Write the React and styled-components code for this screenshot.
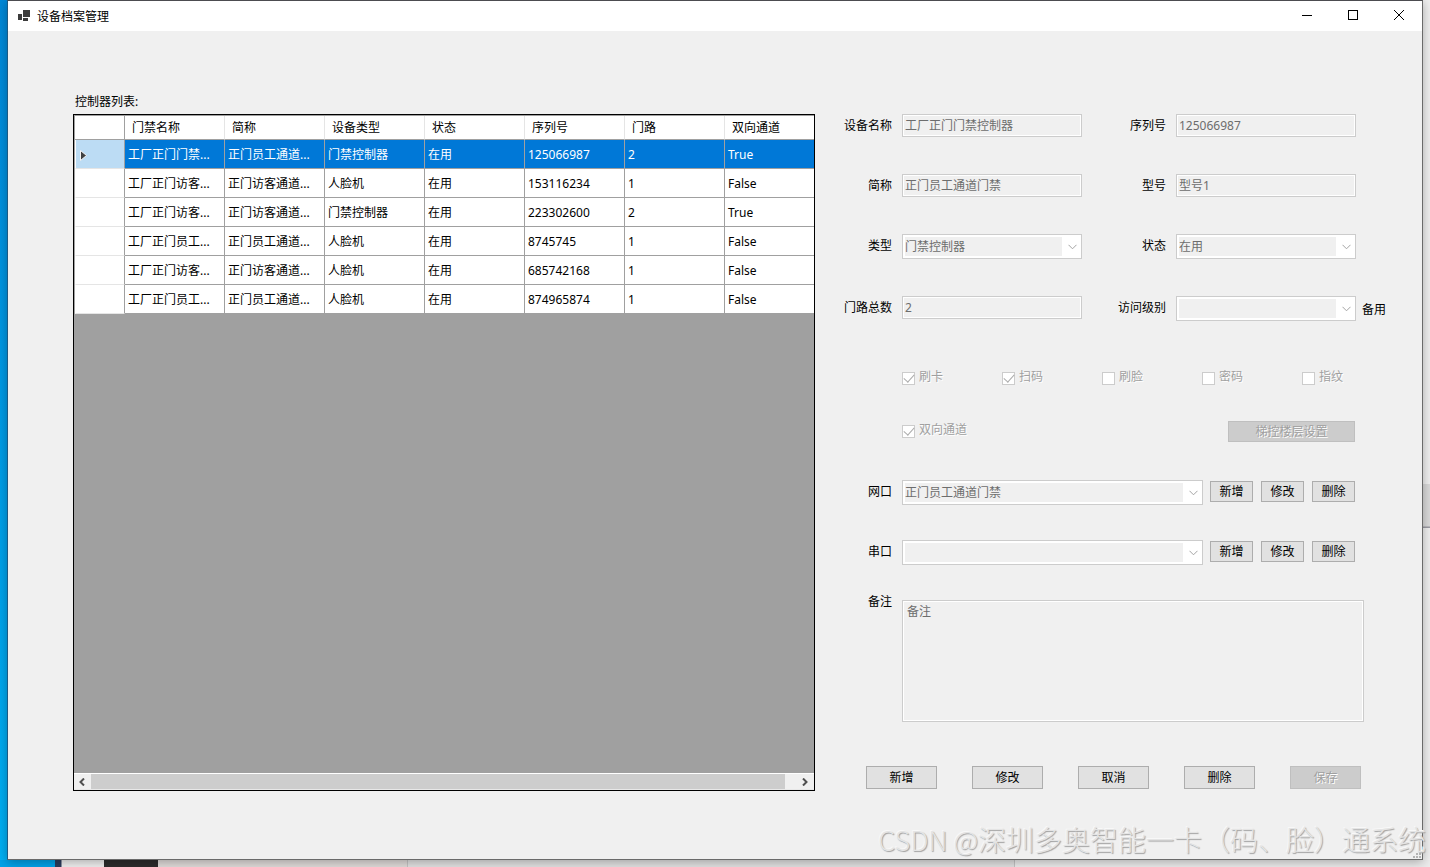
import React from 'react';
import styled, { createGlobalStyle } from 'styled-components';

const GlobalStyle = createGlobalStyle`
    * {
        box-sizing: border-box;
    }
    body {
        margin: 0;
    }
    body, button, input, select, textarea {
        font-family: "Noto Sans", "Noto Sans CJK SC", sans-serif;
        font-size: 12px;
        color: #000;
    }
`;

const Desktop = styled.div`
    position: relative;
    display: flex;
    min-height: 100vh;
    padding: 0 7px 7px;
    overflow: hidden;
    background:
        linear-gradient(90deg, #00a2e8 55px, #2c3c5c 55px 61px, #f0f0f0 62px 104px, #2c2c2c 104px 158px, #e0dcda 158px 407px, #c4c4c4 407px 408px, #e2e2e2 408px 1014px, #c4c4c4 1014px 1015px, #ececec 1015px) left bottom / 100% 7px no-repeat,
        linear-gradient(#f0f0f0 484px, #dadada 484px 526px, #9c9ca4 527px 528px, #f0f0f0 528px) right top / 7px 100% no-repeat,
        linear-gradient(#0088d8, #0098e4 40%, #00b0f4);
`;

const Window = styled.div`
    display: flex;
    flex-direction: column;
    flex: 1;
    min-width: 0;
    border: 1px solid #6a6a6a;
    border-left-color: #1c5a84;
    border-top-color: #4c4c50;
    background: #f0f0f0;
    box-shadow: 0 2px 10px rgba(0, 0, 0, 0.3);
`;

const TitleBar = styled.header`
    display: flex;
    align-items: center;
    height: 30px;
    padding-left: 10px;
    background: #fff;
`;

const Title = styled.h1`
    flex: 1;
    margin: 0 0 0 7px;
    padding-bottom: 1px;
    font-size: 12px;
    font-weight: normal;
`;

const CaptionButton = styled.button`
    display: flex;
    align-items: center;
    justify-content: center;
    width: 46px;
    height: 30px;
    padding: 0 0 2px;
    border: 0;
    background: transparent;
`;

const Content = styled.main`
    display: flex;
    flex: 1;
    gap: 29px;
    padding: 62px 34px 68px 65px;
`;

const ListPane = styled.section`
    display: flex;
    flex-direction: column;
    flex: 1;
    min-width: 0;
    gap: 3px;
`;

const ListCaption = styled.h2`
    margin: 0 2px;
    font-size: 12px;
    font-weight: normal;
    line-height: 18px;
`;

const GridFrame = styled.div`
    display: flex;
    flex-direction: column;
    flex: 1;
    border: 1px solid #000;
    background: #a0a0a0;
`;

const GridViewport = styled.div`
    flex: 1;
    overflow: hidden;
    border-top: 1px solid #a0a0a0;
    border-left: 1px solid #a0a0a0;
`;

const Table = styled.table`
    width: 750px;
    table-layout: fixed;
    border-collapse: separate;
    border-spacing: 0;
    background: #fff;
`;

const HeadCell = styled.th`
    width: ${({ $corner }) => ($corner ? '50px' : '100px')};
    height: 24px;
    padding: 0 7px;
    border-right: 1px solid ${({ $corner }) => ($corner ? '#a0a0a0' : '#e5e5e5')};
    border-bottom: 1px solid #a0a0a0;
    font-weight: normal;
    line-height: 16px;
    text-align: left;
`;

const RowHead = styled.th`
    height: 29px;
    padding: 2px 4px 0;
    border-left: 1px solid #fff;
    border-right: 1px solid #a0a0a0;
    border-bottom: 1px solid #e5e5e5;
    background: ${({ $selected }) => ($selected ? '#bcdcf4' : '#fff')};
    text-align: left;

    svg {
        display: block;
    }
`;

const Cell = styled.td`
    height: 29px;
    padding: 1px 3px 0;
    overflow: hidden;
    border-right: 1px solid #a0a0a0;
    border-bottom: 1px solid #a0a0a0;
    background: ${({ $selected }) => ($selected ? '#0078d7' : '#fff')};
    color: ${({ $selected }) => ($selected ? '#fff' : '#000')};
    line-height: 16px;
    white-space: nowrap;
`;

const ScrollBar = styled.div`
    display: flex;
    height: 17px;
    border-top: 1px solid #fff;
    border-bottom: 1px solid #e8e8e8;
    background: #f0f0f0;
`;

const ScrollArrow = styled.button`
    display: flex;
    align-items: center;
    justify-content: center;
    width: 17px;
    padding: 0 1px 0 0;
    border: 0;
    background: transparent;
`;

const ScrollTrack = styled.div`
    flex: 1;
    padding-right: 12px;
`;

const ScrollThumb = styled.div`
    height: 100%;
    background: #cdcdcd;
`;

const Form = styled.form`
    width: 544px;
    padding-top: 21px;
`;

const FieldRows = styled.div`
    display: flex;
    flex-direction: column;
    gap: 37px;
`;

const FieldRow = styled.div`
    display: grid;
    grid-template-columns: 238px 274px 1fr;
    align-items: start;
`;

const Field = styled.div`
    display: flex;
    align-items: flex-start;
    gap: 10px;
`;

const Label = styled.label`
    flex: 1;
    line-height: 23px;
    text-align: right;
`;

const Note = styled.span`
    padding-left: 6px;
    line-height: 27px;
`;

const TextInput = styled.input`
    width: 180px;
    height: 23px;
    padding: 0 2px 1px;
    border: 1px solid #ccc;
    border-radius: 0;
    background: #f0f0f0;
    box-shadow: inset 0 0 0 1px #fff;
    color: #6d6d6d;
`;

const SelectBox = styled.span`
    position: relative;
    display: block;
    width: ${({ $wide }) => ($wide ? '301px' : '180px')};

    svg {
        position: absolute;
        top: 10px;
        right: 5px;
        pointer-events: none;
    }
`;

const Select = styled.select`
    display: block;
    appearance: none;
    width: 100%;
    height: 25px;
    padding: 0 20px 1px 2px;
    border: 1px solid #ccc;
    border-radius: 0;
    background: linear-gradient(#f0f0f0, #f0f0f0) 2px 2px / calc(100% - 21px) calc(100% - 4px) no-repeat, #fff;
    color: #6d6d6d;
    opacity: 1;
`;

const CheckRow = styled.div`
    display: flex;
    align-items: flex-start;
    margin-top: ${({ $first }) => ($first ? '45px' : '36px')};
    padding-left: 58px;
`;

const CheckLabel = styled.label`
    display: flex;
    flex: none;
    align-items: flex-end;
    gap: 4px;
    width: 100px;
    height: 17px;
    color: #a0a0a0;
    line-height: 16px;
    text-shadow: 1px 1px 0 #fff;
`;

const CheckBox = styled.input`
    appearance: none;
    position: relative;
    width: 13px;
    height: 13px;
    margin: 0;
    border: 1px solid #ccc;
    background: #fff;

    &:checked::after {
        content: '';
        position: absolute;
        top: -1px;
        left: 3px;
        width: 5px;
        height: 9px;
        border: solid #acacac;
        border-width: 0 1px 1px 0;
        transform: rotate(42deg);
    }
`;

const Button = styled.button`
    flex: none;
    width: ${({ $width }) => $width}px;
    height: ${({ $tall }) => ($tall ? '23px' : '21px')};
    padding: 0;
    border: 1px solid #adadad;
    border-radius: 0;
    background: #e1e1e1;
    line-height: 16px;

    &:disabled {
        border-color: #bfbfbf;
        background: #ccc;
        color: #a0a0a0;
        text-shadow: 1px 1px 0 #fff;
    }
`;

const FloorButton = styled(Button)`
    margin-left: 226px;
`;

const PortRows = styled.div`
    display: flex;
    flex-direction: column;
    gap: 35px;
    margin-top: 38px;
`;

const PortRow = styled.div`
    display: flex;
    gap: 7px;
`;

const PortField = styled(Field)`
    width: 359px;
`;

const PortButtons = styled.div`
    display: flex;
    gap: 8px;
    padding-top: 1px;
`;

const MemoField = styled(Field)`
    width: 520px;
    margin-top: 27px;
`;

const MemoLabel = styled(Label)`
    line-height: 19px;
`;

const Memo = styled.textarea`
    display: block;
    width: 462px;
    height: 122px;
    margin-top: 8px;
    padding: 2px 4px;
    border: 1px solid #ccc;
    border-radius: 0;
    background: #f0f0f0;
    box-shadow: inset 0 0 0 1px #fff;
    color: #6d6d6d;
    line-height: 17px;
    resize: none;
`;

const Actions = styled.div`
    display: flex;
    gap: 35px;
    margin-top: 44px;
    padding-left: 22px;
`;

const Watermark = styled.div`
    position: absolute;
    right: 4px;
    bottom: 7px;
    color: #e4e4e4;
    font-family: "Noto Sans CJK SC", sans-serif;
    font-size: 28px;
    font-weight: 300;
    line-height: 40px;
    text-shadow: 1px 1px 1px #a0a0a0, -1px -1px 0 #f8f8f8;
    white-space: nowrap;
    pointer-events: none;
`;

const WatermarkSite = styled.span`
    font-size: 27px;
`;

const Grip = styled.svg`
    position: absolute;
    right: 9px;
    bottom: 9px;
`;

const columns = ['门禁名称', '简称', '设备类型', '状态', '序列号', '门路', '双向通道'];

const devices = [
    ['工厂正门门禁...', '正门员工通道...', '门禁控制器', '在用', '125066987', '2', 'True'],
    ['工厂正门访客...', '正门访客通道...', '人脸机', '在用', '153116234', '1', 'False'],
    ['工厂正门访客...', '正门访客通道...', '门禁控制器', '在用', '223302600', '2', 'True'],
    ['工厂正门员工...', '正门员工通道...', '人脸机', '在用', '8745745', '1', 'False'],
    ['工厂正门访客...', '正门访客通道...', '人脸机', '在用', '685742168', '1', 'False'],
    ['工厂正门员工...', '正门员工通道...', '人脸机', '在用', '874965874', '1', 'False'],
];

const verifyModes = [
    { id: 'card', label: '刷卡', checked: true },
    { id: 'qrcode', label: '扫码', checked: true },
    { id: 'face', label: '刷脸', checked: false },
    { id: 'password', label: '密码', checked: false },
    { id: 'finger', label: '指纹', checked: false },
];

const ports = [
    { id: 'net', label: '网口', value: '正门员工通道门禁' },
    { id: 'serial', label: '串口', value: '' },
];

const AppIcon = () => (
    <svg width="12" height="12" viewBox="0 0 12 12" fill="#3c3c3c" shapeRendering="crispEdges">
        <rect x="5" y="0" width="7" height="7" />
        <rect x="0" y="4" width="4" height="6" />
        <rect x="5" y="8" width="5" height="3" />
    </svg>
);

const TextField = ({ id, label, value }) => (
    <Field>
        <Label htmlFor={id}>{label}</Label>
        <TextInput id={id} defaultValue={value} disabled />
    </Field>
);

const ComboBox = ({ id, value, wide }) => (
    <SelectBox $wide={wide}>
        <Select id={id} defaultValue={value} disabled>
            <option value={value}>{value}</option>
        </Select>
        <svg width="9" height="6" viewBox="0 0 9 6" fill="none" stroke="#a4a4a4">
            <path d="M0.5 0.8L4.5 4.8L8.5 0.8" />
        </svg>
    </SelectBox>
);

const SelectField = ({ id, label, value }) => (
    <Field>
        <Label htmlFor={id}>{label}</Label>
        <ComboBox id={id} value={value} />
    </Field>
);

const Check = ({ id, label, checked }) => (
    <CheckLabel htmlFor={id}>
        <CheckBox type="checkbox" id={id} defaultChecked={checked} disabled />
        {label}
    </CheckLabel>
);

const DeviceGrid = () => (
    <GridFrame>
        <GridViewport>
            <Table>
                <thead>
                    <tr>
                        <HeadCell $corner />
                        {columns.map(name => <HeadCell key={name}>{name}</HeadCell>)}
                    </tr>
                </thead>
                <tbody>
                    {devices.map((device, row) => (
                        <tr key={row}>
                            <RowHead $selected={row === 0}>
                                {row === 0 && (
                                    <svg width="7" height="11" viewBox="0 0 7 11">
                                        <path d="M0.5 0.5V10.5L6.5 5.5Z" fill="#404040" stroke="#f4f4f4" />
                                    </svg>
                                )}
                            </RowHead>
                            {device.map((text, col) => (
                                <Cell key={col} $selected={row === 0}>{text}</Cell>
                            ))}
                        </tr>
                    ))}
                </tbody>
            </Table>
        </GridViewport>
        <ScrollBar>
            <ScrollArrow type="button" aria-label="向左">
                <svg width="6" height="8" viewBox="0 0 6 8" fill="none" stroke="#505050" strokeWidth="2">
                    <path d="M5 0.5L1.5 4L5 7.5" />
                </svg>
            </ScrollArrow>
            <ScrollTrack>
                <ScrollThumb />
            </ScrollTrack>
            <ScrollArrow type="button" aria-label="向右">
                <svg width="6" height="8" viewBox="0 0 6 8" fill="none" stroke="#505050" strokeWidth="2">
                    <path d="M1 0.5L4.5 4L1 7.5" />
                </svg>
            </ScrollArrow>
        </ScrollBar>
    </GridFrame>
);

const DeviceForm = () => (
    <Form>
        <FieldRows>
            <FieldRow>
                <TextField id="name" label="设备名称" value="工厂正门门禁控制器" />
                <TextField id="serialNo" label="序列号" value="125066987" />
            </FieldRow>
            <FieldRow>
                <TextField id="shortName" label="简称" value="正门员工通道门禁" />
                <TextField id="model" label="型号" value="型号1" />
            </FieldRow>
            <FieldRow>
                <SelectField id="type" label="类型" value="门禁控制器" />
                <SelectField id="status" label="状态" value="在用" />
            </FieldRow>
            <FieldRow>
                <TextField id="doors" label="门路总数" value="2" />
                <SelectField id="level" label="访问级别" value="" />
                <Note>备用</Note>
            </FieldRow>
        </FieldRows>

        <CheckRow $first>
            {verifyModes.map(mode => <Check key={mode.id} {...mode} />)}
        </CheckRow>
        <CheckRow>
            <Check id="twoWay" label="双向通道" checked />
            <FloorButton type="button" $width={127} disabled>梯控楼层设置</FloorButton>
        </CheckRow>

        <PortRows>
            {ports.map(({ id, label, value }) => (
                <PortRow key={id}>
                    <PortField>
                        <Label htmlFor={id}>{label}</Label>
                        <ComboBox id={id} value={value} wide />
                    </PortField>
                    <PortButtons>
                        <Button type="button" $width={43}>新增</Button>
                        <Button type="button" $width={43}>修改</Button>
                        <Button type="button" $width={43}>删除</Button>
                    </PortButtons>
                </PortRow>
            ))}
        </PortRows>

        <MemoField>
            <MemoLabel htmlFor="memo">备注</MemoLabel>
            <Memo id="memo" defaultValue="备注" disabled />
        </MemoField>

        <Actions>
            <Button type="button" $width={71} $tall>新增</Button>
            <Button type="button" $width={71} $tall>修改</Button>
            <Button type="button" $width={71} $tall>取消</Button>
            <Button type="button" $width={71} $tall>删除</Button>
            <Button type="button" $width={71} $tall disabled>保存</Button>
        </Actions>
    </Form>
);

const App = () => (
    <React.Fragment>
        <GlobalStyle />
        <Desktop>
            <Window>
                <TitleBar>
                    <AppIcon />
                    <Title>设备档案管理</Title>
                    <CaptionButton type="button" aria-label="最小化">
                        <svg width="10" height="10" viewBox="0 0 10 10" stroke="#000">
                            <path d="M0 5.5H10" />
                        </svg>
                    </CaptionButton>
                    <CaptionButton type="button" aria-label="最大化">
                        <svg width="10" height="10" viewBox="0 0 10 10" fill="none" stroke="#000">
                            <rect x="0.5" y="0.5" width="9" height="9" />
                        </svg>
                    </CaptionButton>
                    <CaptionButton type="button" aria-label="关闭">
                        <svg width="10" height="10" viewBox="0 0 10 10" stroke="#000">
                            <path d="M0 0L10 10M10 0L0 10" />
                        </svg>
                    </CaptionButton>
                </TitleBar>
                <Content>
                    <ListPane>
                        <ListCaption>控制器列表:</ListCaption>
                        <DeviceGrid />
                    </ListPane>
                    <DeviceForm />
                </Content>
            </Window>
            <Grip width="8" height="8" viewBox="0 0 8 8" fill="#b4b4b4">
                <rect x="6" y="0" width="2" height="2" />
                <rect x="3" y="3" width="2" height="2" />
                <rect x="6" y="3" width="2" height="2" />
                <rect x="0" y="6" width="2" height="2" />
                <rect x="3" y="6" width="2" height="2" />
                <rect x="6" y="6" width="2" height="2" />
            </Grip>
            <Watermark>
                <WatermarkSite>CSDN @</WatermarkSite>深圳多奥智能一卡（码、脸）通系统
            </Watermark>
        </Desktop>
    </React.Fragment>
);

export default App;
